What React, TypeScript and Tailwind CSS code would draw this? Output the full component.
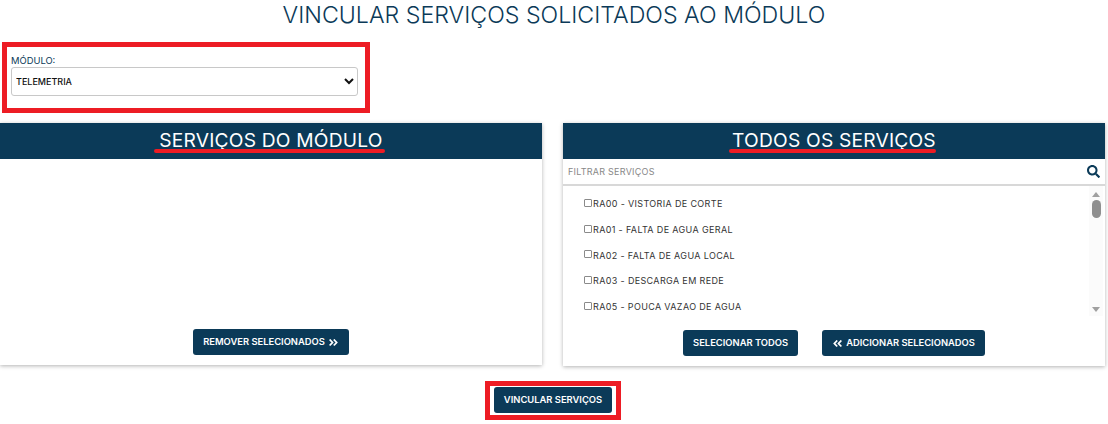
import React from "react";
import { FaAngleDoubleLeft, FaAngleDoubleRight, FaSearch } from "react-icons/fa";

const servicos = [
  "RA00 - VISTORIA DE CORTE",
  "RA01 - FALTA DE AGUA GERAL",
  "RA02 - FALTA DE AGUA LOCAL",
  "RA03 - DESCARGA EM REDE",
  "RA05 - POUCA VAZAO DE AGUA",
];

function PanelHeader({ title, barClass }: { title: string; barClass: string }) {
  return (
    <div className="h-9 bg-[#0b3a58] flex justify-center items-center">
      <span className="relative text-white text-[19.2px] leading-none tracking-[0.2px]">
        {title}
        <span className={`absolute top-[18px] h-[4px] rounded-full bg-[#ed1c24] ${barClass}`} />
      </span>
    </div>
  );
}

function ActionButton({ children }: { children: React.ReactNode }) {
  return (
    <button className="h-[26px] px-[10px] rounded-[3px] bg-[#0b3a58] text-white text-[9.4px] font-semibold flex items-center gap-[3px] whitespace-nowrap">
      {children}
    </button>
  );
}

export default function App() {
  return (
    <div className="h-[424px] w-[1108px] overflow-hidden bg-white text-[#222] font-['Inter','Liberation_Sans',sans-serif]">
      <h1 className="h-[28px] pt-px text-center text-[#0b3a58] text-[23.2px] leading-[28px] font-light">
        VINCULAR SERVIÇOS SOLICITADOS AO MÓDULO
      </h1>

      <div className="ml-[2px] mt-[14px] w-[368px] h-[71px] border-[5px] border-[#ed1c24] pl-1 pr-[7px] pt-[8px]">
        <label className="block text-[9.4px] leading-[11px] text-[#0b3a58]">MÓDULO:</label>
        <select className="mt-[1px] w-full h-[29px] rounded-[3px] border border-[#c8c8c8] bg-white pl-0 text-[9px] font-medium text-[#111]">
          <option>TELEMETRIA</option>
        </select>
      </div>

      <div className="mt-[10px] flex gap-[21px]">
        <section className="w-[542px] h-[242px] bg-white shadow-[0_1px_4px_rgba(0,0,0,0.3)] flex flex-col">
          <PanelHeader title="SERVIÇOS DO MÓDULO" barClass="-left-[5px] -right-[2px]" />
          <div className="mt-auto mb-[10px] flex justify-center">
            <ActionButton>
              REMOVER SELECIONADOS
              <FaAngleDoubleRight className="text-[11px]" />
            </ActionButton>
          </div>
        </section>

        <section className="w-[542px] h-[243px] bg-white shadow-[0_1px_4px_rgba(0,0,0,0.3)] flex flex-col">
          <PanelHeader title="TODOS OS SERVIÇOS" barClass="-left-[3px] right-[0px]" />
          <div className="h-[27px] flex items-center justify-between border-b-2 border-[#d8d8d8] pl-[5px] pr-[5px]">
            <span className="text-[9px] tracking-[0.25px] text-[#888]">FILTRAR SERVIÇOS</span>
            <FaSearch className="text-[13px] text-[#0b3a58]" />
          </div>
          <div className="relative h-[130px] pt-[5px]">
            <ul className="pl-[21px]">
              {servicos.map((s) => (
                <li key={s} className="h-[25.75px] flex items-center text-[9px] text-[#333] tracking-[0.35px]">
                  <input
                    type="checkbox"
                    className="appearance-none w-[8px] h-[8px] m-0 mr-px -mt-[2px] bg-white border border-[#8a8a8a] rounded-[1px]"
                  />
                  {s}
                </li>
              ))}
            </ul>
            {/* barra de rolagem desenhada */}
            <div className="absolute right-[2px] top-0 bottom-0 w-[14px] bg-[#fbfbfb] flex flex-col items-center pt-[6px]">
              <div className="w-0 h-0 border-x-[4px] border-x-transparent border-b-[5px] border-b-[#a0a0a0]" />
              <div className="mt-[3px] w-[9px] h-[18px] rounded-full bg-[#8f8f8f]" />
              <div className="mt-auto mb-[4px] w-0 h-0 border-x-[4px] border-x-transparent border-t-[5px] border-t-[#a0a0a0]" />
            </div>
          </div>
          <div className="mt-[14px] flex justify-center gap-[24px]">
            <ActionButton>SELECIONAR TODOS</ActionButton>
            <ActionButton>
              <FaAngleDoubleLeft className="text-[11px]" />
              ADICIONAR SELECIONADOS
            </ActionButton>
          </div>
        </section>
      </div>

      <div className="mt-[15px] flex justify-center">
        <div className="ml-[-2px] w-[136px] h-[39px] border-[5px] border-[#ed1c24] p-[1px] flex justify-center">
          <ActionButton>VINCULAR SERVIÇOS</ActionButton>
        </div>
      </div>
    </div>
  );
}
